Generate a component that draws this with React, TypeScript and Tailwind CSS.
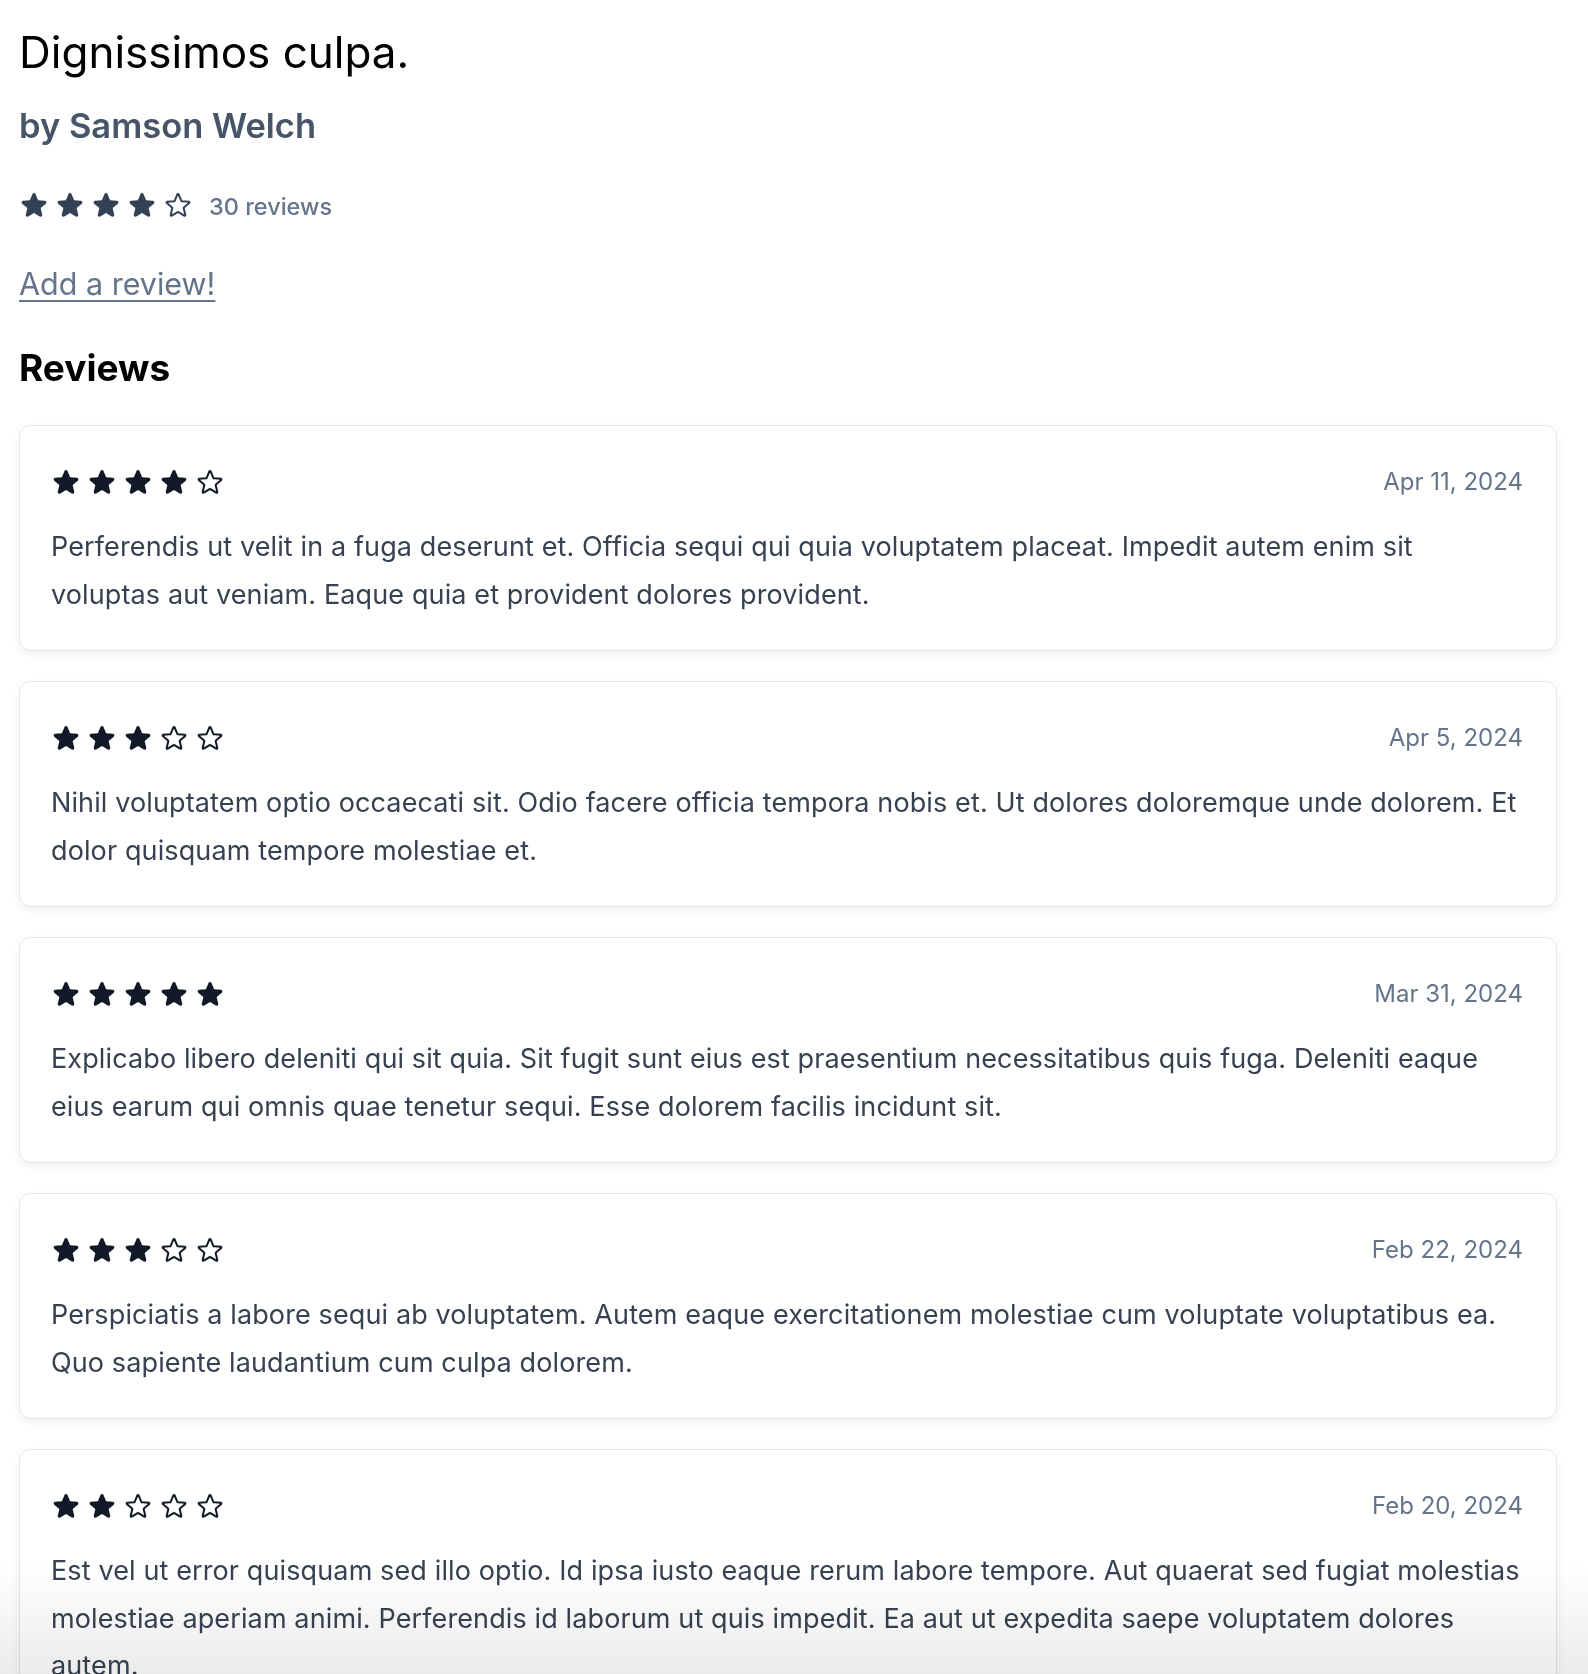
const reviews = [
    {
        rating: 4,
        date: 'Apr 11, 2024',
        body: 'Perferendis ut velit in a fuga deserunt et. Officia sequi qui quia voluptatem placeat. Impedit autem enim sit voluptas aut veniam. Eaque quia et provident dolores provident.',
    },
    {
        rating: 3,
        date: 'Apr 5, 2024',
        body: 'Nihil voluptatem optio occaecati sit. Odio facere officia tempora nobis et. Ut dolores doloremque unde dolorem. Et dolor quisquam tempore molestiae et.',
    },
    {
        rating: 5,
        date: 'Mar 31, 2024',
        body: 'Explicabo libero deleniti qui sit quia. Sit fugit sunt eius est praesentium necessitatibus quis fuga. Deleniti eaque eius earum qui omnis quae tenetur sequi. Esse dolorem facilis incidunt sit.',
    },
    {
        rating: 3,
        date: 'Feb 22, 2024',
        body: 'Perspiciatis a labore sequi ab voluptatem. Autem eaque exercitationem molestiae cum voluptate voluptatibus ea. Quo sapiente laudantium cum culpa dolorem.',
    },
    {
        rating: 2,
        date: 'Feb 20, 2024',
        body: 'Est vel ut error quisquam sed illo optio. Id ipsa iusto eaque rerum labore tempore. Aut quaerat sed fugiat molestias molestiae aperiam animi. Perferendis id laborum ut quis impedit. Ea aut ut expedita saepe voluptatem dolores autem.',
    },
];

// Star icons (heroicons solid / outline)
function Star({filled, className}: {filled: boolean, className: string}) {
    if (filled) {
        return (
            <svg viewBox="0 0 24 24" fill="currentColor" className={className}>
                <path d="M10.788 3.21c.448-1.077 1.976-1.077 2.424 0l2.082 5.006 5.404.434c1.164.093 1.636 1.545.749 2.305l-4.117 3.527 1.257 5.273c.271 1.136-.964 2.033-1.96 1.425L12 18.354 7.373 21.18c-.996.608-2.231-.29-1.960-1.425l1.257-5.273-4.117-3.527c-.887-.76-.415-2.212.749-2.305l5.404-.434 2.082-5.005Z" />
            </svg>
        )
    }
    return (
        <svg viewBox="0 0 24 24" fill="none" stroke="currentColor" strokeWidth={1.6} className={className}>
            <path strokeLinejoin="round" d="M11.48 3.499a.562.562 0 0 1 1.04 0l2.125 5.111a.563.563 0 0 0 .475.345l5.518.442c.499.04.701.663.321.988l-4.204 3.602a.563.563 0 0 0-.182.557l1.285 5.385a.562.562 0 0 1-.84.61l-4.725-2.885a.563.563 0 0 0-.586 0L6.982 20.54a.562.562 0 0 1-.84-.61l1.285-5.386a.562.562 0 0 0-.182-.557l-4.204-3.602a.562.562 0 0 1 .321-.988l5.518-.442a.563.563 0 0 0 .475-.345L11.48 3.5Z" />
        </svg>
    )
}

function Stars({rating, className}: {rating: number, className: string}) {
    return (
        <div className="flex items-center gap-[6px]">
            {[1, 2, 3, 4, 5].map((i) => (
                <Star key={i} filled={i <= rating} className={className} />
            ))}
        </div>
    )
}

function ReviewCard({rating, date, body}: {rating: number, date: string, body: string}) {
    return (
        <div className="bg-white border border-[#e6e7ea] rounded-[12px] shadow-[0_3px_8px_rgba(0,0,0,0.06)] pl-[31px] pr-[33px] pt-[30px] pb-[32px]">
            <div className="flex items-center justify-between h-[51px]">
                <Stars rating={rating} className="w-[30px] h-[30px] text-[#111827]" />
                <span className="text-[24px] leading-[36px] text-[#64748b]">{date}</span>
            </div>
            <p className="mt-[16px] text-[27px] leading-[47.5px] tracking-[0.12px] text-[#374151]">
                {body}
            </p>
        </div>
    )
}

export default function App() {
    return (
        <div className="relative h-[1674px] overflow-hidden bg-white font-['Inter','Liberation_Sans',sans-serif]">
            <div className="pl-[19px] pr-[31px] pt-[25px]">
                <h1 className="text-[44px] leading-[54px] text-black">
                    Dignissimos culpa.
                </h1>
                <h2 className="mt-[26px] text-[34.5px] leading-[42px] font-semibold text-[#475569]">
                    by Samson Welch
                </h2>

                <div className="mt-[43px] flex items-center h-[30px] gap-[16px]">
                    <Stars rating={4} className="w-[30px] h-[30px] text-[#334155]" />
                    <span className="text-[23.5px] leading-[30px] font-medium text-[#64748b] pt-[3px]">30 reviews</span>
                </div>

                <a href="#" className="block w-fit mt-[41px] text-[30.5px] leading-[45px] text-[#64748b] underline underline-offset-[5px] decoration-[2px]">
                    Add a review!
                </a>

                <h2 className="mt-[39px] text-[37px] leading-[45px] font-bold text-black">
                    Reviews
                </h2>

                <div className="mt-[35px] flex flex-col gap-[30px]">
                    {reviews.map((r) => (
                        <ReviewCard key={r.date} {...r} />
                    ))}
                </div>
            </div>

            {/* bottom fade */}
            <div className="absolute inset-x-0 bottom-0 h-[110px] bg-gradient-to-b from-white to-[#ebebeb] mix-blend-multiply pointer-events-none" />
        </div>
    )
}
